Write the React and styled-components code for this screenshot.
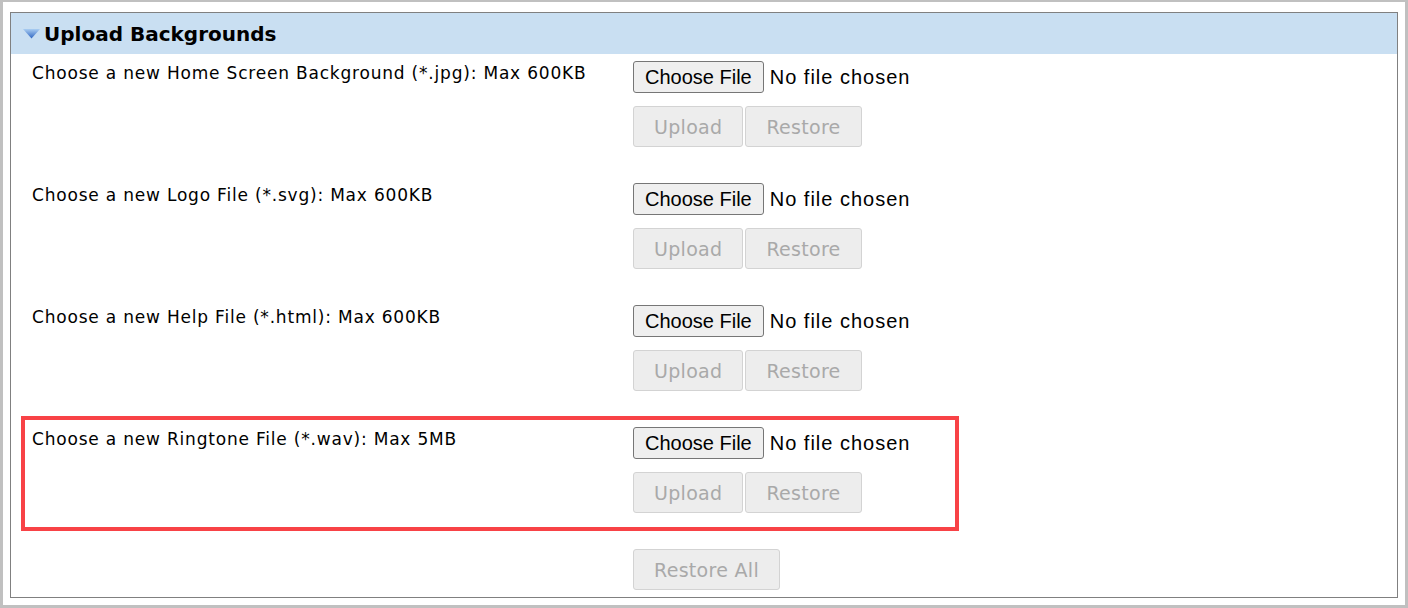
import React from 'react'
import styled, { createGlobalStyle } from 'styled-components'

const GlobalStyle = createGlobalStyle`
  html, body {
    margin: 0;
    padding: 0;
    background: #fff;
  }
  body {
    font-family: "DejaVu Sans", Verdana, sans-serif;
    color: #000;
  }
`

const uploads = [
  { label: 'Choose a new Home Screen Background (*.jpg): Max 600KB' },
  { label: 'Choose a new Logo File (*.svg): Max 600KB' },
  { label: 'Choose a new Help File (*.html): Max 600KB' },
  { label: 'Choose a new Ringtone File (*.wav): Max 5MB', highlight: true },
]

export default function App() {
  return (
    <>
      <GlobalStyle />
      <Frame>
        <Panel>
          <Header>
            <svg width="17" height="10" viewBox="0 0 17 10">
              <defs>
                <linearGradient id="tri" x1="0" y1="0" x2="0" y2="1">
                  <stop offset="0" stopColor="#a9cdf2" />
                  <stop offset="1" stopColor="#2f66c2" />
                </linearGradient>
              </defs>
              <polygon points="0,0 17,0 8.5,9.5" fill="url(#tri)" />
            </svg>
            <Title>Upload Backgrounds</Title>
          </Header>
          <Rows>
            {uploads.map((u) => (
              <Row key={u.label} $highlight={u.highlight}>
                <Label>{u.label}</Label>
                <Controls>
                  <FileLine>
                    <ChooseButton type="button">Choose File</ChooseButton>
                    <NoFile>No file chosen</NoFile>
                  </FileLine>
                  <ButtonGroup>
                    <DisabledButton disabled>Upload</DisabledButton>
                    <DisabledButton disabled>Restore</DisabledButton>
                  </ButtonGroup>
                </Controls>
              </Row>
            ))}
            <FooterRow>
              <span />
              <div>
                <DisabledButton disabled>Restore All</DisabledButton>
              </div>
            </FooterRow>
          </Rows>
        </Panel>
      </Frame>
    </>
  )
}

const Frame = styled.div`
  box-sizing: border-box;
  width: 1408px;
  height: 608px;
  border: 3px solid #c0c0c0;
  border-top-width: 2px;
  padding: 10px 7px 7px 7px;
`

const Panel = styled.div`
  box-sizing: border-box;
  height: 100%;
  border: 1px solid #808080;
`

const Header = styled.div`
  height: 41px;
  background: #c9dff2;
  display: flex;
  align-items: center;
  padding-left: 12px;
  gap: 4px;
  svg {
    margin-top: 1px;
  }
`

const Title = styled.span`
  font-size: 20px;
  font-weight: bold;
  margin-top: 1px;
`

const Rows = styled.div`
  display: flex;
  flex-direction: column;
  gap: 15px;
`

const Row = styled.div`
  box-sizing: border-box;
  width: 930px;
  height: 107px;
  margin-left: 14px;
  padding: 7px 0 0 7px;
  display: grid;
  grid-template-columns: 601px auto;
  outline: ${(p) => (p.$highlight ? '4px solid #f84246' : 'none')};
`

const FooterRow = styled(Row)`
  height: auto;
  padding-bottom: 7px;
`

const Label = styled.div`
  font-size: 17px;
  letter-spacing: 0.8px;
  line-height: 21px;
  margin-top: 2px;
`

const Controls = styled.div`
  display: flex;
  flex-direction: column;
  align-items: flex-start;
  gap: 13px;
`

const FileLine = styled.div`
  display: flex;
  align-items: center;
  gap: 6px;
  font-family: "Liberation Sans", Arial, sans-serif;
  font-size: 20px;
`

const ChooseButton = styled.button`
  box-sizing: border-box;
  height: 32px;
  padding: 0 11px;
  font-family: "Liberation Sans", Arial, sans-serif;
  font-size: 20px;
  color: #000;
  background: #efefef;
  border: 1px solid #767676;
  border-radius: 3px;
`

const NoFile = styled.span`
  color: #000;
  letter-spacing: 1px;
`

const ButtonGroup = styled.div`
  display: flex;
  gap: 2px;
`

const DisabledButton = styled.button`
  box-sizing: border-box;
  height: 41px;
  padding: 0 20px;
  font-family: "DejaVu Sans", Verdana, sans-serif;
  font-size: 19px;
  letter-spacing: 0.3px;
  color: #a9a9a9;
  background: #ededed;
  border: 1px solid #d3d3d3;
  border-radius: 3px;
`
